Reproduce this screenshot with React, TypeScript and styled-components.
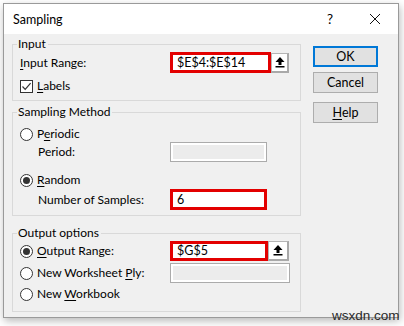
import React from "react";
import styled, { createGlobalStyle } from "styled-components";

const GlobalStyle = createGlobalStyle`
  html, body { margin: 0; padding: 0; background: #ffffff; }
  body { font-family: Lato, "Noto Sans", Arial, sans-serif; font-size: 12px; color: #000; }
  * { box-sizing: border-box; }
`;

const Screen = styled.div`
  position: relative;
  width: 404px;
  height: 326px;
  overflow: hidden;
  padding: 3px 0 0 3px;
`;

const Dialog = styled.div`
  width: 396px;
  height: 315px;
  border: 1px solid #9a9a9a;
  background: #f0f0f0;
  box-shadow: 1px 3px 8px rgba(0, 0, 0, 0.28);
  display: flex;
  flex-direction: column;
`;

const TitleBar = styled.div`
  height: 30px;
  background: #ffffff;
  display: flex;
  align-items: center;
  padding-left: 9px;
  flex-shrink: 0;
`;

const Title = styled.span`
  flex: 1;
  font-size: 12.5px;
  line-height: 14px;
  padding-top: 1px;
`;

const TitleGlyph = styled.span<{ $w: number }>`
  width: ${(p) => p.$w}px;
  display: flex;
  justify-content: center;
  align-items: center;
  font-size: 13.5px;
`;

const Body = styled.div`
  flex: 1;
  display: flex;
  padding: 3px 0 0 8px;
`;

const Groups = styled.div`
  width: 289px;
  display: flex;
  flex-direction: column;
`;

const Group = styled.fieldset<{ $mt: number; $pb: number }>`
  margin: ${(p) => p.$mt}px 0 0 0;
  padding: 0 0 ${(p) => p.$pb}px 7px;
  border: 1px solid #d9d9d9;
  min-width: 0;
`;

const Legend = styled.legend`
  margin-left: -3px;
  padding: 0 2px 0 1px;
  line-height: 14px;
  height: 14px;
`;

const Row = styled.div<{ $h: number; $mt: number; $indent?: number }>`
  height: ${(p) => p.$h}px;
  margin-top: ${(p) => p.$mt}px;
  display: flex;
  align-items: center;
  padding-left: ${(p) => p.$indent ?? 0}px;
`;

const Label = styled.span<{ $w: number }>`
  width: ${(p) => p.$w}px;
  flex-shrink: 0;
  line-height: 14px;
  white-space: nowrap;
`;

const U = styled.span`
  text-decoration: underline;
  text-underline-offset: 2px;
`;

const TextBox = styled.div<{ $w: number; $h: number; $red?: boolean; $disabled?: boolean }>`
  width: ${(p) => p.$w}px;
  height: ${(p) => p.$h}px;
  background: ${(p) => (p.$disabled ? "#ececec" : "#ffffff")};
  border: ${(p) => (p.$red ? "3px solid #e30000" : "1px solid #ababab")};
  box-shadow: ${(p) => (p.$disabled ? "inset 0 0 0 2px #ffffff" : "none")};
  display: flex;
  align-items: center;
  padding-left: ${(p) => (p.$red ? 4 : 6)}px;
  font-size: 12.5px;
  line-height: 14px;
  flex-shrink: 0;
`;

const PickButton = styled.div<{ $w: number; $h: number }>`
  width: ${(p) => p.$w}px;
  height: ${(p) => p.$h}px;
  background: #ffffff;
  border: 1px solid #b5b5b5;
  border-right: 2px solid #a9a9a9;
  border-bottom: 2px solid #a9a9a9;
  display: flex;
  align-items: center;
  justify-content: center;
  flex-shrink: 0;
`;

const CheckBox = styled.span`
  width: 13px;
  height: 13px;
  border: 1px solid #333333;
  background: #ffffff;
  display: inline-flex;
  align-items: center;
  justify-content: center;
  margin-right: 4px;
  flex-shrink: 0;
`;

const Radio = styled.span<{ $on?: boolean }>`
  width: 13px;
  height: 13px;
  border-radius: 50%;
  border: 1px solid #333333;
  background: #ffffff;
  display: inline-flex;
  align-items: center;
  justify-content: center;
  margin-right: 4px;
  flex-shrink: 0;
  &::after {
    content: "";
    width: 7px;
    height: 7px;
    border-radius: 50%;
    background: ${(p) => (p.$on ? "#333333" : "transparent")};
  }
`;

const Buttons = styled.div`
  margin-left: 12px;
  padding-top: 9px;
  display: flex;
  flex-direction: column;
`;

const DlgButton = styled.div<{ $default?: boolean; $mt: number }>`
  width: 65px;
  height: 21px;
  margin-top: ${(p) => p.$mt}px;
  background: #e1e1e1;
  border: ${(p) => (p.$default ? "2px solid #0078d7" : "1px solid #adadad")};
  display: flex;
  align-items: center;
  justify-content: center;
  font-size: 12.5px;
  line-height: 14px;
`;

const Watermark = styled.div`
  position: absolute;
  left: 332px;
  top: 308px;
  font-family: "Liberation Sans", Arial, sans-serif;
  font-size: 13.5px;
  color: #2a2a2a;
`;

const UpArrow = () => (
  <svg width="10" height="11" viewBox="0 0 10 11">
    <polygon points="5,0 0.5,5 9.5,5" fill="#000" />
    <rect x="3.5" y="4.5" width="3" height="3.5" fill="#000" />
    <rect x="0.5" y="9" width="9" height="1.5" fill="#000" />
  </svg>
);

const Check = () => (
  <svg width="11" height="11" viewBox="0 0 11 11">
    <polyline points="1.5,5.5 4.2,8.3 9.6,2.2" fill="none" stroke="#333" strokeWidth="1.2" />
  </svg>
);

const CloseX = () => (
  <svg width="12" height="12" viewBox="0 0 12 12">
    <path d="M1 1 L11 11 M11 1 L1 11" stroke="#111" strokeWidth="1" />
  </svg>
);

export default function App() {
  return (
    <>
      <GlobalStyle />
      <Screen>
        <Dialog>
          <TitleBar>
            <Title>Sampling</Title>
            <TitleGlyph $w={44}>?</TitleGlyph>
            <TitleGlyph $w={46}>
              <CloseX />
            </TitleGlyph>
          </TitleBar>
          <Body>
            <Groups>
              <Group $mt={0} $pb={4}>
                <Legend>Input</Legend>
                <Row $h={21} $mt={1}>
                  <Label $w={150}>
                    <U>I</U>nput Range:
                  </Label>
                  <TextBox $w={101} $h={21} $red>
                    $E$4:$E$14
                  </TextBox>
                  <PickButton $w={18} $h={20}>
                    <UpArrow />
                  </PickButton>
                </Row>
                <Row $h={20} $mt={3}>
                  <CheckBox>
                    <Check />
                  </CheckBox>
                  <Label $w={100}>
                    <U>L</U>abels
                  </Label>
                </Row>
              </Group>

              <Group $mt={4} $pb={5}>
                <Legend>Sampling Method</Legend>
                <Row $h={16} $mt={7}>
                  <Radio />
                  <Label $w={100}>
                    P<U>e</U>riodic
                  </Label>
                </Row>
                <Row $h={20} $mt={0} $indent={18}>
                  <Label $w={132}>Period:</Label>
                  <TextBox $w={97} $h={20} $disabled />
                </Row>
                <Row $h={16} $mt={10}>
                  <Radio $on />
                  <Label $w={100}>
                    <U>R</U>andom
                  </Label>
                </Row>
                <Row $h={21} $mt={1} $indent={18}>
                  <Label $w={132}>Number of Samples:</Label>
                  <TextBox $w={97} $h={21} $red>
                    6
                  </TextBox>
                </Row>
              </Group>

              <Group $mt={10} $pb={9}>
                <Legend>Output options</Legend>
                <Row $h={20} $mt={1}>
                  <Radio $on />
                  <Label $w={133}>
                    <U>O</U>utput Range:
                  </Label>
                  <TextBox $w={98} $h={20} $red>
                    $G$5
                  </TextBox>
                  <PickButton $w={21} $h={20}>
                    <UpArrow />
                  </PickButton>
                </Row>
                <Row $h={20} $mt={2}>
                  <Radio />
                  <Label $w={133}>
                    New Worksheet <U>P</U>ly:
                  </Label>
                  <TextBox $w={120} $h={20} $disabled />
                </Row>
                <Row $h={16} $mt={3}>
                  <Radio />
                  <Label $w={133}>
                    New <U>W</U>orkbook
                  </Label>
                </Row>
              </Group>
            </Groups>
            <Buttons>
              <DlgButton $default $mt={0}>OK</DlgButton>
              <DlgButton $mt={5}>Cancel</DlgButton>
              <DlgButton $mt={9}>
                <U>H</U>elp
              </DlgButton>
            </Buttons>
          </Body>
        </Dialog>
        <Watermark>wsxdn.com</Watermark>
      </Screen>
    </>
  );
}
